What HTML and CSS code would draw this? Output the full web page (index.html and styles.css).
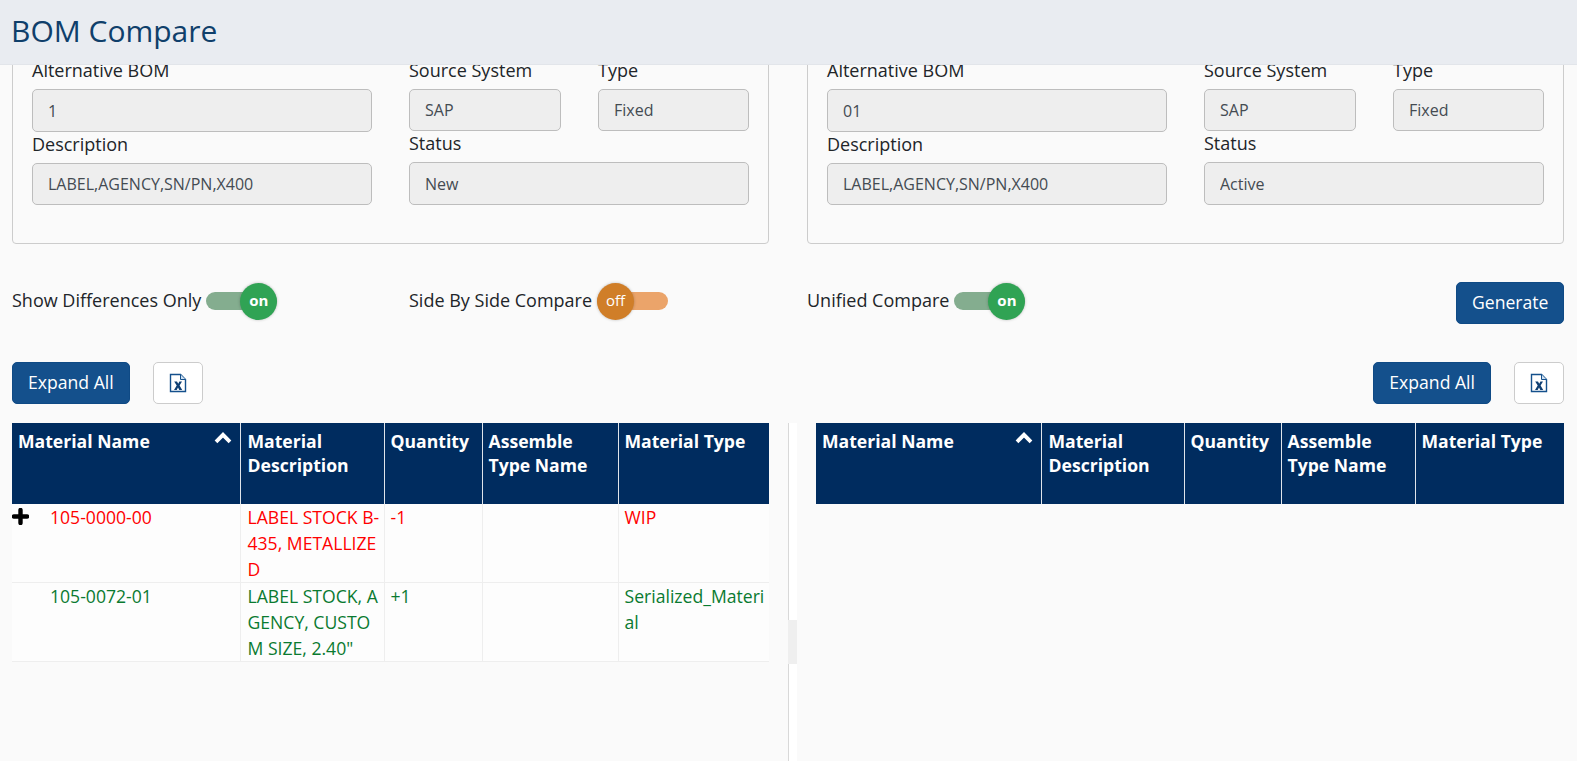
FILE: index.html
```html
<!DOCTYPE html>
<html lang="en">

<head>
    <meta charset="UTF-8">
    <meta name="viewport" content="width=device-width, initial-scale=1.0">
    <title>BOM Compare</title>
    <link rel="stylesheet" href="styles.css">
</head>

<body>
    <header class="page-header">
        <h1>BOM Compare</h1>
    </header>

    <main class="page-main">
        <section class="cards">
            <div class="card">
                <div class="card-col">
                    <label>Alternative BOM</label>
                    <input class="value value-lg" type="text" value="1" readonly>
                    <label>Description</label>
                    <input class="value" type="text" value="LABEL,AGENCY,SN/PN,X400" readonly>
                </div>
                <div class="card-col">
                    <div class="field-pair">
                        <div class="field">
                            <label>Source System</label>
                            <input class="value" type="text" value="SAP" readonly>
                        </div>
                        <div class="field">
                            <label>Type</label>
                            <input class="value" type="text" value="Fixed" readonly>
                        </div>
                    </div>
                    <label>Status</label>
                    <input class="value value-lg" type="text" value="New" readonly>
                </div>
            </div>
            <div class="card">
                <div class="card-col">
                    <label>Alternative BOM</label>
                    <input class="value value-lg" type="text" value="01" readonly>
                    <label>Description</label>
                    <input class="value" type="text" value="LABEL,AGENCY,SN/PN,X400" readonly>
                </div>
                <div class="card-col">
                    <div class="field-pair">
                        <div class="field">
                            <label>Source System</label>
                            <input class="value" type="text" value="SAP" readonly>
                        </div>
                        <div class="field">
                            <label>Type</label>
                            <input class="value" type="text" value="Fixed" readonly>
                        </div>
                    </div>
                    <label>Status</label>
                    <input class="value value-lg" type="text" value="Active" readonly>
                </div>
            </div>
        </section>

        <section class="options">
            <div class="option">
                <span>Show Differences Only</span>
                <div class="toggle toggle-on"><span class="knob">on</span></div>
            </div>
            <div class="option">
                <span>Side By Side Compare</span>
                <div class="toggle toggle-off"><span class="knob">off</span></div>
            </div>
            <div class="option option-last">
                <span>Unified Compare</span>
                <div class="toggle toggle-on"><span class="knob">on</span></div>
                <button class="btn btn-generate" type="button">Generate</button>
            </div>
        </section>

        <section class="tools">
            <div class="tool-group">
                <button class="btn" type="button">Expand All</button>
                <button class="btn-export" type="button" aria-label="Export">
                    <svg width="18" height="20" viewBox="0 0 18 20">
                        <path d="M1.5 1.5H11.5L16.5 6.5V18.5H1.5Z" fill="#fff" stroke="#14508c" stroke-width="1.4" />
                        <path d="M11.5 1.5V6.5H16.5" fill="#cfe0f0" stroke="#14508c" stroke-width="1" />
                        <path d="M5.2 8.6H8L9.2 10.8L10.4 8.6H13L10.6 12.6L13.2 17H10.3L9 14.6L7.7 17H5L7.7 12.6Z" fill="#0f3f73" />
                    </svg>
                </button>
            </div>
            <div class="tool-group">
                <button class="btn" type="button">Expand All</button>
                <button class="btn-export" type="button" aria-label="Export">
                    <svg width="18" height="20" viewBox="0 0 18 20">
                        <path d="M1.5 1.5H11.5L16.5 6.5V18.5H1.5Z" fill="#fff" stroke="#14508c" stroke-width="1.4" />
                        <path d="M11.5 1.5V6.5H16.5" fill="#cfe0f0" stroke="#14508c" stroke-width="1" />
                        <path d="M5.2 8.6H8L9.2 10.8L10.4 8.6H13L10.6 12.6L13.2 17H10.3L9 14.6L7.7 17H5L7.7 12.6Z" fill="#0f3f73" />
                    </svg>
                </button>
            </div>
        </section>

        <section class="compare">
            <div class="compare-left">
                <table class="bom-table">
                    <colgroup>
                        <col class="left-c1">
                        <col class="left-c2">
                        <col class="left-c3">
                        <col class="left-c4">
                        <col class="left-c5">
                    </colgroup>
                    <thead>
                        <tr>
                            <th>
                                <div class="th-sort">
                                    <span>Material Name</span>
                                    <svg width="18" height="12" viewBox="0 0 18 12">
                                        <path d="M2 9.8L9 2.8L16 9.8" fill="none" stroke="#fff" stroke-width="3.8" />
                                    </svg>
                                </div>
                            </th>
                            <th>Material Description</th>
                            <th>Quantity</th>
                            <th>Assemble Type Name</th>
                            <th>Material Type</th>
                        </tr>
                    </thead>
                    <tbody>
                        <tr class="row-removed">
                            <td class="name-cell">
                                <div class="name-wrap">
                                    <svg class="expander" width="17" height="17" viewBox="0 0 17 17">
                                        <path d="M8.5 2V15M2 8.5H15" fill="none" stroke="#000" stroke-width="4.4" stroke-linecap="round" />
                                    </svg>
                                    <span>105-0000-00</span>
                                </div>
                            </td>
                            <td>LABEL STOCK B-435, METALLIZED</td>
                            <td>-1</td>
                            <td></td>
                            <td>WIP</td>
                        </tr>
                        <tr class="row-added">
                            <td class="name-cell">
                                <div class="name-wrap">
                                    <span class="expander"></span>
                                    <span>105-0072-01</span>
                                </div>
                            </td>
                            <td>LABEL STOCK, AGENCY, CUSTOM SIZE, 2.40"</td>
                            <td>+1</td>
                            <td></td>
                            <td>Serialized_Material</td>
                        </tr>
                    </tbody>
                </table>
            </div>

            <div class="splitter">
                <div class="splitter-thumb"></div>
            </div>

            <div class="compare-right">
                <table class="bom-table">
                    <colgroup>
                        <col class="right-c1">
                        <col class="right-c2">
                        <col class="right-c3">
                        <col class="right-c4">
                        <col class="right-c5">
                    </colgroup>
                    <thead>
                        <tr>
                            <th>
                                <div class="th-sort">
                                    <span>Material Name</span>
                                    <svg width="18" height="12" viewBox="0 0 18 12">
                                        <path d="M2 9.8L9 2.8L16 9.8" fill="none" stroke="#fff" stroke-width="3.8" />
                                    </svg>
                                </div>
                            </th>
                            <th>Material Description</th>
                            <th>Quantity</th>
                            <th>Assemble Type Name</th>
                            <th>Material Type</th>
                        </tr>
                    </thead>
                </table>
            </div>
        </section>
    </main>
</body>

</html>
```

FILE: styles.css
```css
* {
    box-sizing: border-box;
}

html,
body {
    height: 100%;
}

body {
    margin: 0;
    display: flex;
    flex-direction: column;
    overflow: hidden;
    background-color: #fafafa;
    color: #212529;
    font-family: "Open Sans", sans-serif;
    font-size: 18px;
}

.page-header {
    position: relative;
    z-index: 2;
    flex: none;
    height: 65px;
    padding-left: 11px;
    background-color: #e9ecf1;
    border-bottom: 1px solid #e2e5ea;
}

.page-header h1 {
    margin: 0;
    color: #0f3f6b;
    font-size: 30px;
    font-weight: 400;
    line-height: 62px;
}

/* the page is scrolled a little: the cards run under the header */
.page-main {
    flex: 1;
    min-height: 0;
    display: flex;
    flex-direction: column;
    margin-top: -15px;
    padding: 0 13px 0 12px;
}

.cards {
    display: grid;
    grid-template-columns: 757px 757px;
    column-gap: 38px;
}

.card {
    display: grid;
    grid-template-columns: 340px 340px;
    column-gap: 37px;
    padding: 7px 19px 38px 19px;
    background-color: #fafafa;
    border: 1px solid #ccc;
    border-radius: 4px;
}

.card-col {
    display: flex;
    flex-direction: column;
}

.card label {
    display: block;
    margin-bottom: 7px;
    line-height: 24px;
}

.field-pair {
    display: grid;
    grid-template-columns: 152px 151px;
    column-gap: 37px;
}

.field {
    display: flex;
    flex-direction: column;
}

.value {
    width: 100%;
    height: 42px;
    padding: 0 15px;
    background-color: #eeeeee;
    border: 1px solid #bdbdbd;
    border-radius: 5px;
    color: #444b52;
    font-family: "Open Sans", sans-serif;
    font-size: 16px;
    outline: none;
}

.value-lg {
    height: 43px;
}

.options {
    display: grid;
    grid-template-columns: 397px 398px 1fr;
    margin-top: 38px;
}

.option {
    display: flex;
    align-items: flex-start;
    gap: 5px;
    line-height: 36px;
}

.option-last .btn-generate {
    margin-left: auto;
}

.toggle {
    display: flex;
    align-items: center;
    width: 71px;
    height: 18px;
    margin-top: 10px;
    border-radius: 9px;
}

.toggle-on {
    justify-content: flex-end;
    background-color: #84ad8f;
}

.toggle-off {
    justify-content: flex-start;
    background-color: #eba46a;
}

.knob {
    flex: none;
    width: 37px;
    height: 37px;
    border-radius: 50%;
    color: #fff;
    font-size: 15px;
    line-height: 35px;
    text-align: center;
    box-shadow: 0 0 3px rgba(0, 0, 0, 0.25);
}

.toggle-on .knob {
    background-color: #30a354;
    font-weight: 700;
}

.toggle-off .knob {
    background-color: #d07e28;
}

.btn {
    height: 42px;
    padding: 0 15px 2px;
    background-color: #14508c;
    border: 1px solid #0f4a85;
    border-radius: 5px;
    color: #fff;
    font-family: "Open Sans", sans-serif;
    font-size: 17.6px;
    cursor: pointer;
}

.btn-generate {
    width: 108px;
    flex: none;
}

.tools {
    display: flex;
    justify-content: space-between;
    margin-top: 38px;
}

.tool-group {
    display: flex;
    gap: 23px;
}

.btn-export {
    display: flex;
    align-items: center;
    justify-content: center;
    width: 50px;
    height: 42px;
    padding: 0;
    background-color: #fff;
    border: 1px solid #ccc;
    border-radius: 5px;
    cursor: pointer;
}

.compare {
    flex: 1;
    min-height: 0;
    display: flex;
    margin-top: 19px;
}

.compare-left {
    flex: none;
    width: 757px;
}

.compare-right {
    flex: none;
    width: 748px;
}

.splitter {
    flex: none;
    width: 9px;
    margin: 0 19px;
    background-color: #fff;
    border-left: 1px solid #d8d8d8;
}

.splitter-thumb {
    height: 44px;
    margin: 197px 0 0 -1px;
    background-color: #efefef;
}

.bom-table {
    width: 100%;
    border-collapse: collapse;
    table-layout: fixed;
}

.left-c1 { width: 228px; }
.left-c2 { width: 144px; }
.left-c3 { width: 98px; }
.left-c4 { width: 136px; }
.left-c5 { width: 151px; }

.right-c1 { width: 225px; }
.right-c2 { width: 143px; }
.right-c3 { width: 97px; }
.right-c4 { width: 134px; }
.right-c5 { width: 149px; }

.bom-table th {
    height: 81px;
    padding: 6px 6px 0;
    background-color: #002c5f;
    border-right: 1px solid #dfe4ea;
    color: #fff;
    font-size: 17.6px;
    font-weight: 700;
    line-height: 24px;
    text-align: left;
    vertical-align: top;
}

.bom-table th:nth-child(2),
.bom-table td:nth-child(2) {
    padding-left: 7px;
}

.bom-table th:last-child {
    border-right: none;
}

.th-sort {
    display: flex;
    justify-content: space-between;
    padding-right: 2px;
}

.th-sort svg {
    margin-top: 3px;
}

.bom-table td {
    padding: 0 2px 0 6px;
    background-color: #fdfdfd;
    border-right: 1px solid #eeeeee;
    border-bottom: 1px solid #eeeeee;
    font-size: 17.6px;
    line-height: 26px;
    vertical-align: top;
    word-break: break-all;
}

.bom-table td:last-child {
    border-right: none;
}

.bom-table td.name-cell {
    padding-left: 0;
}

.name-wrap {
    display: flex;
}

.expander {
    flex: none;
    width: 17px;
    height: 17px;
    margin: 4px 21px 0 0;
}

.row-removed td {
    color: #ff0000;
}

.row-added td {
    color: #0a7a30;
}
```
